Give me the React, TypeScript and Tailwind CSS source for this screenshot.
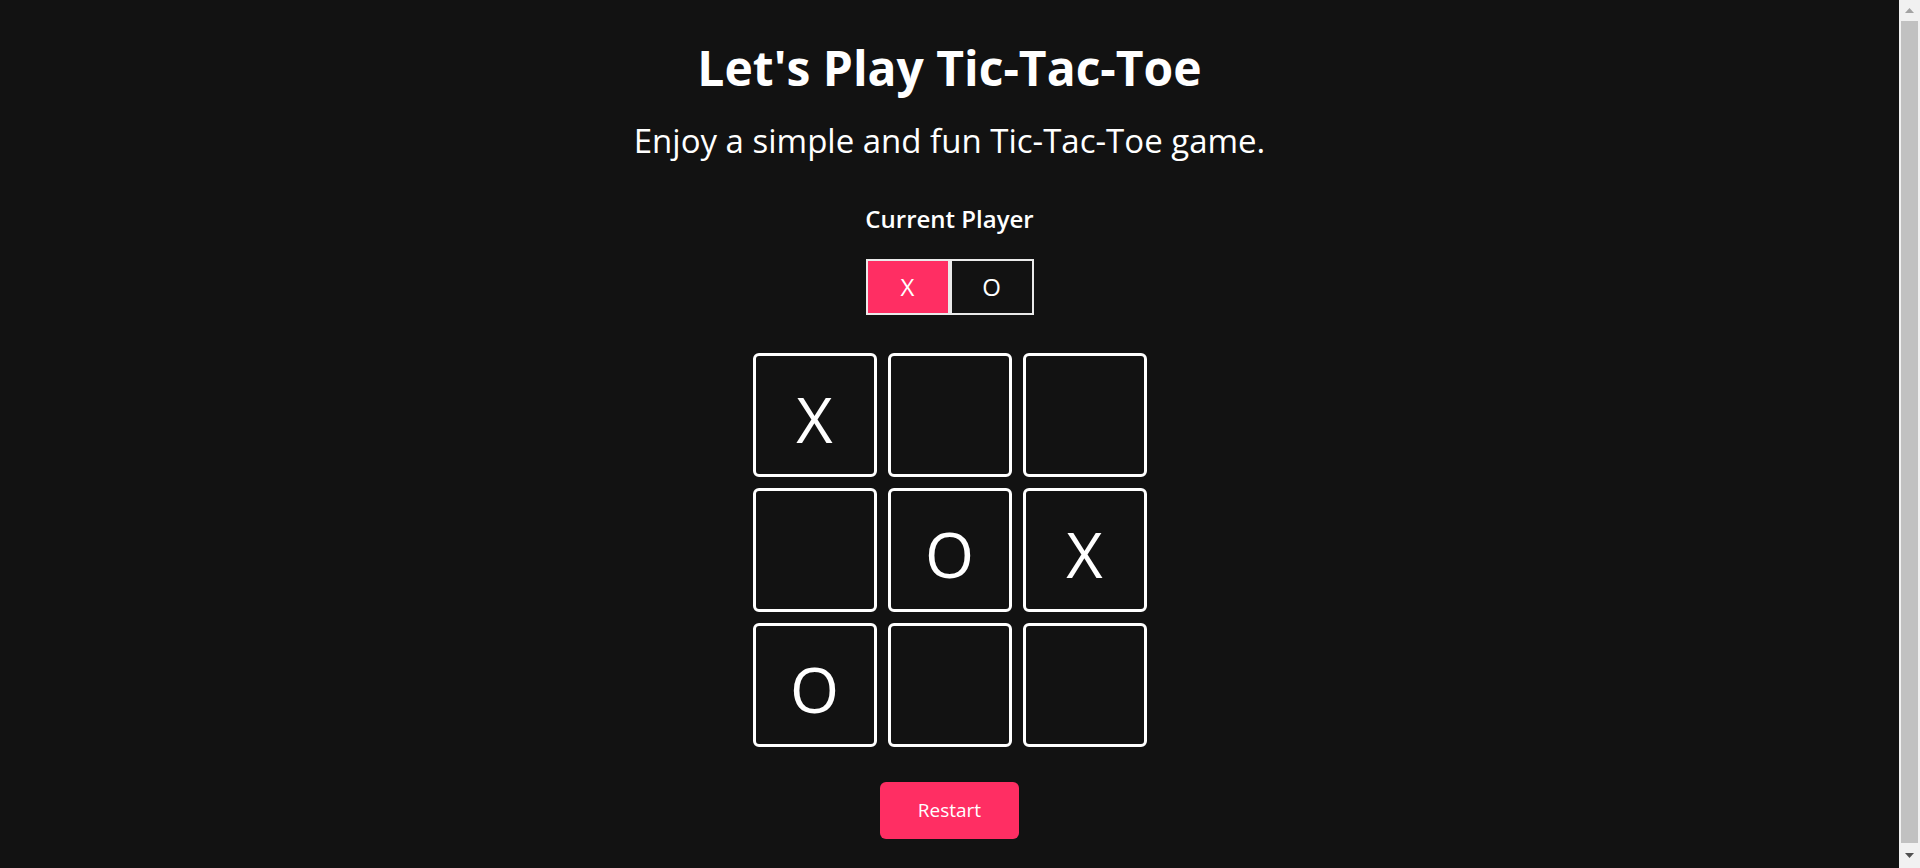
import { useState } from "react";

const initialBoard = ["X", "", "", "", "O", "X", "O", "", ""];

function Scrollbar() {
  return (
    <div className="w-[21px] h-full shrink-0 bg-[#f1f1f1] flex flex-col items-center">
      <div className="h-[21px] w-full flex items-center justify-center">
        <svg width="9" height="5" viewBox="0 0 9 5">
          <path d="M4.5 0L9 5H0z" fill="#a3a3a3" />
        </svg>
      </div>
      <div className="w-[17px] flex-1 bg-[#c1c1c1]" />
      <div className="h-[25px] w-full flex items-center justify-center">
        <svg width="9" height="5" viewBox="0 0 9 5">
          <path d="M0 0H9L4.5 5z" fill="#505050" />
        </svg>
      </div>
    </div>
  );
}

function App() {
  const [board, setBoard] = useState<string[]>(initialBoard);
  const [current, setCurrent] = useState<"X" | "O">("X");

  const play = (i: number) => {
    if (board[i]) return;
    const next = [...board];
    next[i] = current;
    setBoard(next);
    setCurrent(current === "X" ? "O" : "X");
  };

  return (
    <div className="w-full h-[868px] flex flex-row overflow-hidden bg-[#121212] font-['Open_Sans',sans-serif]">
      <main className="flex-1 text-white flex flex-col items-center">
        <h1 className="mt-[38px] text-[48px] leading-[60px] font-bold">Let's Play Tic-Tac-Toe</h1>
        <p className="mt-[22px] text-[33px] leading-[42px]">Enjoy a simple and fun Tic-Tac-Toe game.</p>
        <h3 className="mt-[41px] text-[24px] leading-[32px] font-semibold">Current Player</h3>
        <div className="mt-[24px] flex flex-row">
          {(["X", "O"] as const).map(p => (
            <button
              key={p}
              onClick={() => setCurrent(p)}
              className={`w-[84px] h-[56px] border-2 border-[#eaeaea] text-[24px] leading-none flex items-center justify-center ${current === p ? "bg-[#ff2e63]" : "bg-[#121212]"}`}
            >
              {p}
            </button>
          ))}
        </div>
        <div className="mt-[38px] grid grid-cols-[repeat(3,124px)] gap-[11px]">
          {board.map((cell, i) => (
            <button
              key={i}
              onClick={() => play(i)}
              className="w-[124px] h-[124px] border-[3px] border-white rounded-[6px] bg-[#121212] text-[63px] leading-none flex items-center justify-center pt-[6px]"
            >
              {cell}
            </button>
          ))}
        </div>
        <button
          onClick={() => {
            setBoard(Array(9).fill(""));
            setCurrent("X");
          }}
          className="mt-[35px] w-[139px] h-[57px] rounded-md bg-[#ff2e63] text-[19px] text-white flex items-center justify-center"
        >
          Restart
        </button>
      </main>
      <Scrollbar />
    </div>
  );
}

export default App;
